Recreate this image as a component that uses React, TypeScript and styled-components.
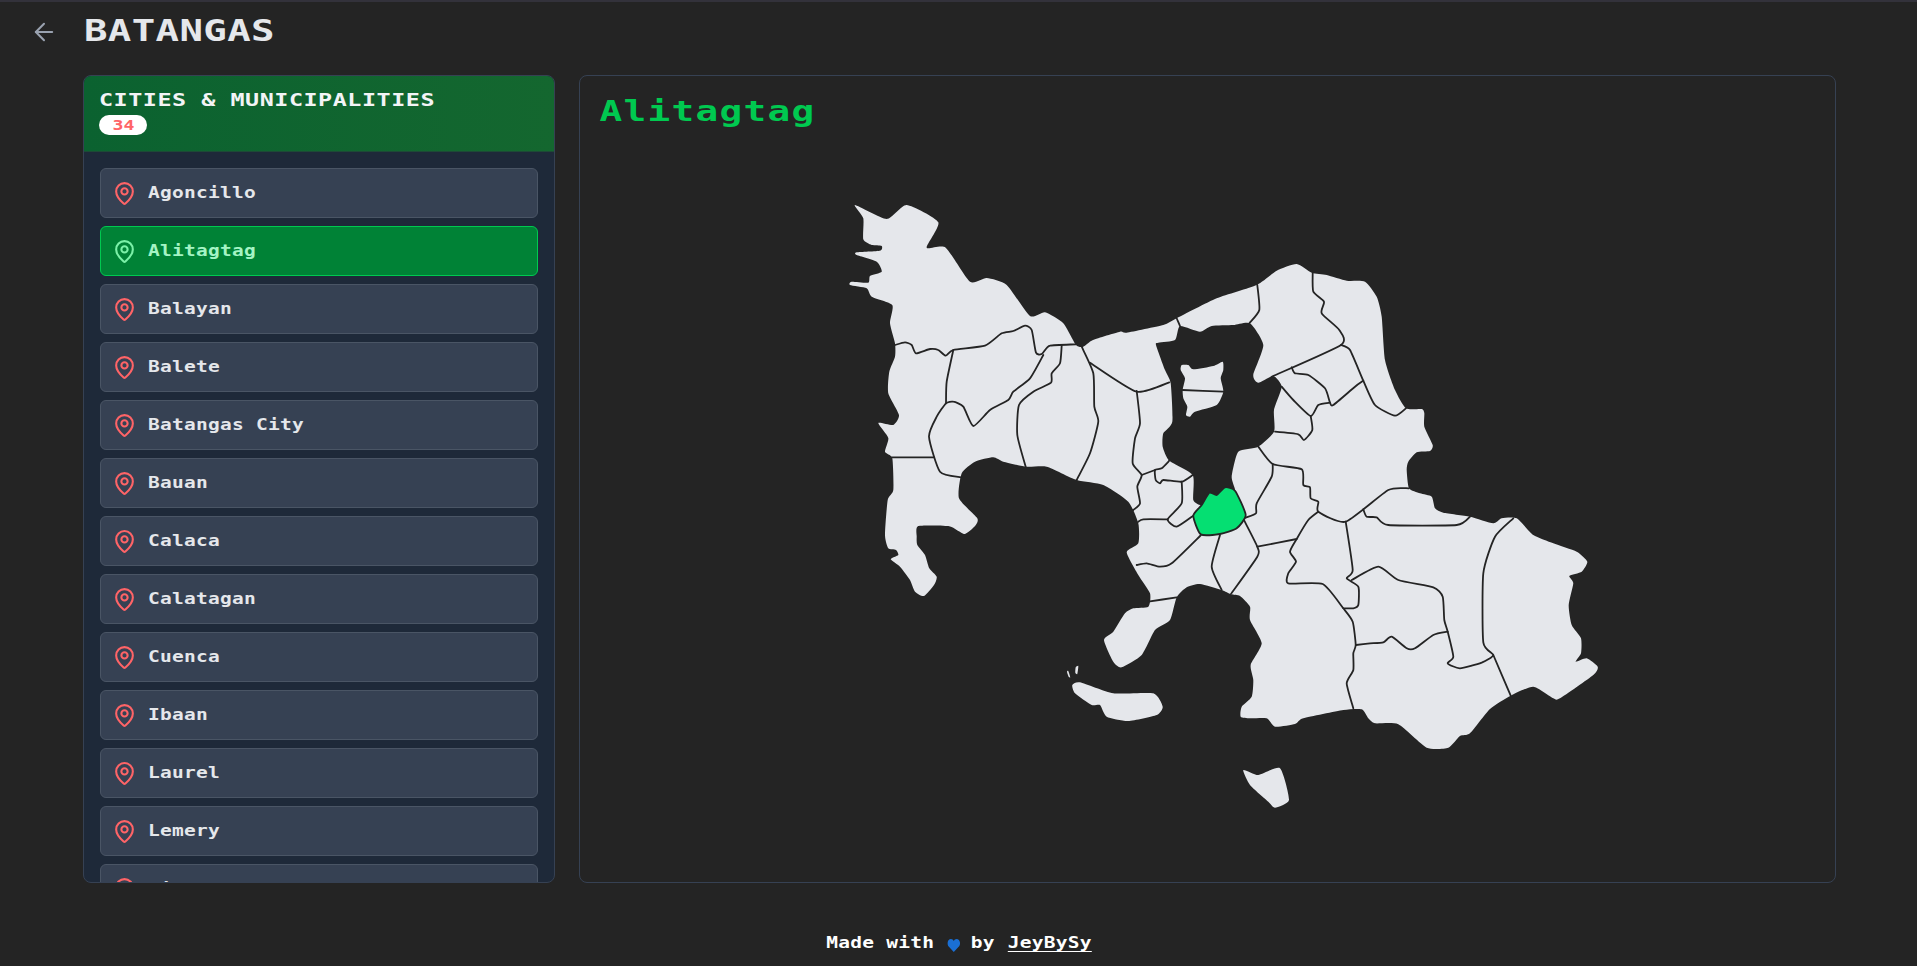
import styled, { createGlobalStyle, css } from "styled-components";
import { ArrowLeft, MapPin } from "lucide-react";

const municipalities = [
  "Agoncillo", "Alitagtag", "Balayan", "Balete", "Batangas City", "Bauan", "Calaca",
  "Calatagan", "Cuenca", "Ibaan", "Laurel", "Lemery", "Lian", "Lipa City", "Lobo",
  "Mabini", "Malvar", "Mataasnakahoy", "Nasugbu", "Padre Garcia", "Rosario", "San Jose",
  "San Juan", "San Luis", "San Nicolas", "San Pascual", "Santa Teresita", "Santo Tomas",
  "Taal", "Talisay", "Tanauan City", "Taysan", "Tingloy", "Tuy",
];

type Pts = number[];

// points traced from 3x crops of the map: origin of the crop + value / 3
const crop = (ox: number, oy: number, pts: Pts): Pts =>
  pts.map((v, i) => (i % 2 === 0 ? ox + v / 3 : oy + v / 3));

const spline = (pts: Pts, closed = false) => {
  const n = pts.length / 2;
  const at = (i: number) => {
    const k = closed ? (i + n) % n : Math.min(n - 1, Math.max(0, i));
    return [pts[k * 2], pts[k * 2 + 1]];
  };
  let d = `M${at(0)[0].toFixed(1)} ${at(0)[1].toFixed(1)}`;
  const t = 0.1;
  for (let i = 0; i < (closed ? n : n - 1); i++) {
    const [x0, y0] = at(i - 1);
    const [x1, y1] = at(i);
    const [x2, y2] = at(i + 1);
    const [x3, y3] = at(i + 2);
    d += `C${(x1 + (x2 - x0) * t).toFixed(1)} ${(y1 + (y2 - y0) * t).toFixed(1)} ${(x2 - (x3 - x1) * t).toFixed(1)} ${(y2 - (y3 - y1) * t).toFixed(1)} ${x2.toFixed(1)} ${y2.toFixed(1)}`;
  }
  return closed ? d + "Z" : d;
};

const mainland: Pts = [
  855, 205, 886.7, 219, 906.7, 205, 938.3, 222.3, 926.7, 247.7, 945.7, 247.7, 970, 281.7, 986.7, 278,
  1006.7, 285, 1030, 316, 1045, 312.3, 1063.3, 323.3, 1076, 345, 1083.3, 346.7, 1093, 340, 1120, 331.7,
  1126.7, 332.7, 1163.3, 325, 1176.7, 318.3, 1216.7, 298.3, 1256.7, 285, 1276.7, 270.7, 1296.7, 264,
  1311.7, 272.7, 1326.7, 275, 1346.7, 280.7, 1365, 281.7, 1376.7, 296.7, 1381.7, 316.7, 1385, 360,
  1395, 390, 1406, 408.3, 1421.7, 409, 1424.3, 413, 1424.3, 426.7, 1432.7, 445, 1430, 451, 1416.7, 452.3,
  1408.3, 461.7, 1406.7, 470, 1409, 488.3, 1420, 493.3, 1431.7, 496.7, 1435, 508.3, 1443.3, 512.7,
  1470, 516.7, 1493.3, 523.3, 1501.7, 518.3, 1516.7, 518.3, 1533.3, 535, 1553.3, 543.3, 1576.7, 551.7,
  1587.3, 561.7, 1581.7, 571.7, 1569.3, 576, 1573.3, 583.3, 1568.7, 605, 1571.7, 625, 1581, 638.3,
  1581, 653.3, 1575.7, 661.7, 1586.7, 658.3, 1597.7, 666.7, 1593.3, 675, 1560, 698.3, 1553.3, 698.3,
  1533.3, 686.7, 1510.7, 695.7, 1490, 709, 1470, 733.3, 1460, 736, 1448.3, 747.7, 1426.7, 747.7,
  1398.3, 724.3, 1375, 723.3, 1368.3, 718.3, 1361.7, 709.3, 1343.3, 710, 1303.3, 718.3, 1295, 724,
  1275, 726.7, 1266.7, 718.3, 1250, 718.3, 1240.7, 716.7, 1241.7, 706.7, 1251.7, 696.7, 1253.3, 680,
  1250.7, 665, 1261.7, 643.3, 1250, 620, 1250, 606.7, 1240, 596, 1231, 594.3, 1221.7, 590, 1200, 584,
  1186.7, 587.3, 1176.7, 597.3, 1170, 620, 1155, 630, 1141.7, 655, 1121.7, 667.3, 1113.3, 661.7, 1104, 640,
  1113.3, 631.7, 1125, 613.3, 1133.3, 608.3, 1148.3, 606.7, 1150, 593.3, 1138.3, 575, 1126.7, 552.3,
  1138.3, 543.3, 1138.3, 523.3, 1128.3, 501.7, 1103.3, 485, 1076.7, 480, 1046.7, 466.7, 1026.7, 466.7,
  1003.3, 461.7, 993.3, 457.3, 975, 461.7, 961.7, 473.3, 959, 498.3, 977.3, 518.3, 975, 526, 965, 534,
  956.7, 530, 948.3, 526, 918.3, 526, 916.7, 536.7, 917.3, 545, 925, 555, 929.3, 568.3, 936.7, 576.7,
  934, 585, 924, 596, 915, 591.7, 910, 580, 900, 566.7, 890.7, 559.3, 898.3, 555, 896, 550, 888.3, 548.3,
  885, 535, 887.7, 500, 893.3, 490, 892.3, 458.3, 885, 451.7, 888.3, 438, 878.3, 423, 893.3, 425, 899, 415,
  888.3, 393.3, 889.3, 371.7, 895, 356.7, 895, 343.3, 890, 323.3, 892.3, 305, 871.7, 296.7, 866.7, 288.3,
  850, 285, 851.7, 281.7, 868.3, 282.7, 870, 276, 881.7, 271.7, 876.7, 261.7, 856.7, 255, 856.7, 252.3,
  880, 250.7, 881.7, 246, 871.7, 245, 863.3, 239.3, 863.3, 218.3,
];

const lake = crop(1100, 250, [
  240, 228, 300, 245, 335, 228, 400, 225, 450, 220, 490, 285, 460, 375, 475, 398, 520, 378, 545, 410,
  522, 480, 522, 545, 475, 590, 415, 605, 395, 680, 405, 720, 375, 712, 350, 735, 328, 728, 305, 765,
  280, 750, 278, 675, 208, 632, 188, 590, 190, 550, 217, 515, 212, 400, 195, 360, 168, 285, 175, 278, 225, 270,
]);

const volcano = crop(1100, 250, [
  245, 345, 265, 345, 280, 358, 340, 348, 368, 335, 370, 360, 362, 385, 370, 425, 350, 465, 285, 485,
  270, 500, 258, 495, 262, 470, 250, 445, 248, 420, 255, 385, 242, 360,
]);

const islands = [
  crop(1000, 480, [217, 615, 240, 607, 340, 640, 460, 640, 488, 680, 470, 705, 385, 723, 320, 710, 300, 675, 275, 675, 225, 640]),
  crop(1000, 480, [730, 870, 775, 885, 840, 865, 867, 960, 825, 983, 805, 965, 750, 915]),
  crop(1000, 480, [201, 575, 205, 573, 211, 592, 206, 590]),
  crop(1000, 480, [227, 562, 235, 558, 232, 582, 226, 578]),
];

const alitagtag = crop(1100, 250, [
  280, 797, 305, 765, 328, 728, 350, 735, 375, 712, 405, 722, 437, 795, 410, 835, 360, 852, 302, 853,
]);

const borders: Pts[] = [
  crop(830, 190, [195, 465, 225, 457, 245, 465, 258, 490, 300, 477, 325, 480, 347, 497, 370, 480, 465, 467, 515, 430, 550, 423, 585, 407, 605, 420, 618, 488, 635, 492, 660, 467, 738, 463]),
  crop(830, 190, [370, 480, 350, 575, 348, 640]),
  crop(830, 190, [640, 495, 600, 565, 550, 605, 535, 630, 480, 660, 430, 708, 400, 650, 370, 635, 348, 640, 320, 680, 297, 740, 330, 845, 392, 862]),
  crop(830, 190, [185, 802, 312, 802]),
  crop(830, 190, [695, 467, 690, 520, 665, 550, 663, 578, 610, 605, 567, 645, 562, 735, 587, 830]),
  crop(830, 190, [755, 470, 790, 550, 793, 650, 805, 695, 780, 790, 740, 870]),
  crop(830, 190, [780, 518, 920, 605, 1018, 577]),
  crop(830, 190, [1040, 385, 1050, 408]),
  crop(1100, 250, [110, 423, 120, 520, 105, 565, 98, 640, 125, 675, 112, 710, 120, 760, 100, 780]),
  crop(1100, 250, [472, 105, 478, 180, 448, 220]),
  crop(1100, 250, [638, 68, 640, 125, 672, 155, 665, 190, 718, 240, 723, 285, 515, 380]),
  crop(1100, 250, [723, 285, 750, 300, 790, 392, 825, 465, 885, 497, 918, 475]),
  crop(1100, 250, [575, 352, 585, 370, 625, 375, 675, 415, 690, 458, 700, 465, 765, 410, 790, 392]),
  crop(1100, 250, [545, 410, 580, 450, 632, 498, 655, 465, 690, 458]),
  crop(1100, 250, [632, 498, 637, 540, 612, 570, 595, 553, 525, 545]),
  crop(1100, 250, [475, 590, 518, 642, 605, 658, 610, 705, 630, 712, 632, 745, 655, 755, 655, 785, 737, 815, 865, 720, 927, 715]),
  crop(1100, 250, [518, 642, 515, 680, 470, 760, 468, 790, 437, 803]),
  crop(1100, 250, [790, 778, 800, 800, 830, 802, 865, 825, 1070, 825, 1110, 800]),
  crop(1100, 250, [208, 632, 185, 655, 165, 660, 167, 690, 180, 700, 190, 690, 245, 695, 278, 675]),
  crop(1100, 250, [245, 695, 245, 760, 203, 808, 230, 830, 280, 797]),
  crop(1100, 250, [165, 660, 125, 675]),
  crop(1100, 250, [115, 815, 130, 808, 203, 808]),
  crop(1000, 480, [603, 165, 515, 250, 480, 260, 440, 250, 410, 255]),
  crop(1000, 480, [660, 165, 635, 260, 665, 330]),
  crop(1000, 480, [733, 122, 772, 200, 772, 230, 692, 343]),
  crop(1000, 480, [772, 200, 890, 177]),
  crop(1000, 480, [955, 95, 925, 120, 890, 177, 870, 215, 888, 245, 865, 280, 865, 310, 968, 312, 1030, 385, 1058, 425, 1067, 495, 1060, 520, 1060, 570, 1040, 610, 1060, 685]),
  crop(1000, 480, [1037, 125, 1058, 270, 1040, 295, 1075, 320, 1075, 375, 1060, 385, 1030, 385]),
  crop(1000, 480, [530, 352, 445, 365]),
  crop(1300, 480, [155, 300, 235, 260, 295, 300, 400, 322, 428, 350, 433, 420, 443, 455, 460, 530, 443, 550, 480, 565, 545, 548, 580, 525, 550, 487, 550, 280, 585, 170, 640, 115]),
  crop(1300, 480, [168, 495, 210, 490, 250, 487, 275, 470, 320, 505, 345, 505, 400, 465, 443, 455]),
  crop(1300, 480, [580, 525, 632, 647]),
  crop(1100, 250, [248, 420, 370, 425]),
];

const GlobalStyle = createGlobalStyle`
  body {
    margin: 0;
    background: #242424;
    overflow: hidden;
    font-family: "DejaVu Sans Mono", "Liberation Mono", monospace;
  }
`;

// the reference font is a wide pixel face, so the mono glyphs get stretched
const pixelText = css`
  display: inline-block;
  width: max-content;
  font-weight: 700;
  white-space: nowrap;
  transform: scaleX(1.3);
  transform-origin: left center;
`;

const Page = styled.div`
  height: 964px;
  border-top: 2px solid #33323b;
`;

const TopBar = styled.header`
  display: flex;
  align-items: center;
  gap: 26px;
  height: 56px;
  padding-left: 30px;
  margin-bottom: 17px;
  color: #99a1af;

  svg {
    margin-top: 3px;
  }
`;

const PageTitle = styled.h1`
  ${pixelText};
  margin: 0;
  font-size: 30px;
  letter-spacing: 0.3px;
  color: #e5e7eb;
`;

const Main = styled.main`
  display: grid;
  grid-template-columns: 472px 1257px;
  gap: 24px;
  width: 1753px;
  height: 808px;
  margin-left: 83px;
`;

const Panel = styled.aside`
  display: flex;
  flex-direction: column;
  min-height: 0;
  overflow: hidden;
  box-sizing: border-box;
  border: 1px solid #364153;
  border-radius: 8px;
  background: #1e2939;
`;

const PanelHeader = styled.div`
  flex: none;
  box-sizing: border-box;
  height: 76px;
  padding: 12px 15px 0;
  background: linear-gradient(90deg, #0b6230, #14672f);
  border-bottom: 1px solid #1d4a36;
`;

const PanelTitle = styled.h2`
  ${pixelText};
  display: block;
  margin: 0;
  font-size: 18px;
  line-height: 24px;
  letter-spacing: 0.4px;
  color: #f3f4f6;
`;

const Badge = styled.div`
  display: flex;
  align-items: center;
  justify-content: center;
  width: 48px;
  height: 20px;
  margin-top: 3px;
  border-radius: 10px;
  background: #fff;
  color: #ff6467;
`;

const BadgeText = styled.span`
  ${pixelText};
  font-size: 14px;
  transform-origin: center;
`;

const List = styled.ul`
  display: flex;
  flex-direction: column;
  gap: 8px;
  flex: 1;
  min-height: 0;
  margin: 0;
  padding: 16px;
  list-style: none;
  overflow-y: auto;
  scrollbar-width: none;
`;

const Item = styled.li<{ $active?: boolean }>`
  display: flex;
  align-items: center;
  flex: none;
  gap: 11px;
  box-sizing: border-box;
  height: 50px;
  padding-left: 11px;
  border: 1px solid ${({ $active }) => ($active ? "#00c950" : "#4a5565")};
  border-radius: 6px;
  background: ${({ $active }) => ($active ? "#008236" : "#364153")};
  color: ${({ $active }) => ($active ? "#7bf1a8" : "#ff6467")};
`;

const ItemName = styled.span<{ $active?: boolean }>`
  ${pixelText};
  font-size: 15px;
  letter-spacing: 0.2px;
  color: ${({ $active }) => ($active ? "#a4f4c4" : "#e5e7eb")};
`;

const MapCard = styled.section`
  display: flex;
  flex-direction: column;
  box-sizing: border-box;
  border: 1px solid #364153;
  border-radius: 8px;
`;

const MapTitle = styled.h2`
  ${pixelText};
  display: block;
  height: 36px;
  margin: 0;
  padding: 17px 0 11px 15px;
  font-size: 29px;
  line-height: 36px;
  letter-spacing: 1px;
  color: #00c950;
`;

const MapSvg = styled.svg`
  display: block;
  flex: none;
  width: 1255px;
  height: 742px;
`;

const Footer = styled.footer`
  display: flex;
  justify-content: center;
  padding: 50px 0 0 2px;
`;

const Credit = styled.div`
  display: flex;
  align-items: center;
  gap: 10px;
  height: 20px;
  transform: scaleX(1.3);
  color: #fff;
  font-size: 15px;
  font-weight: 700;
  letter-spacing: 0.2px;
  white-space: nowrap;
`;

const Author = styled.a`
  color: inherit;
  text-decoration: underline;
  text-underline-offset: 3px;
`;

const Heart = styled.svg`
  width: 10px;
  height: 13px;
  margin: 4px -2px 0 0;
`;

export default function App() {
  return (
    <Page>
      <GlobalStyle />
      <TopBar>
        <ArrowLeft size={28} strokeWidth={1.75} />
        <PageTitle>BATANGAS</PageTitle>
      </TopBar>
      <Main>
        <Panel>
          <PanelHeader>
            <PanelTitle>CITIES &amp; MUNICIPALITIES</PanelTitle>
            <Badge>
              <BadgeText>34</BadgeText>
            </Badge>
          </PanelHeader>
          <List>
            {municipalities.map((name) => (
              <Item key={name} $active={name === "Alitagtag"}>
                <MapPin size={25} strokeWidth={2} />
                <ItemName $active={name === "Alitagtag"}>{name}</ItemName>
              </Item>
            ))}
          </List>
        </Panel>
        <MapCard>
          <MapTitle>Alitagtag</MapTitle>
          <MapSvg viewBox="580 140 1255 742">
            <path d={spline(mainland, true) + spline(lake, true)} fill="#e5e7eb" fillRule="evenodd" />
            <path d={spline(volcano, true)} fill="#e5e7eb" />
            {islands.map((pts, i) => (
              <path key={i} d={spline(pts, true)} fill="#e5e7eb" />
            ))}
            {borders.map((pts, i) => (
              <path key={i} d={spline(pts)} fill="none" stroke="#242424" strokeWidth={1.8} strokeLinecap="round" />
            ))}
            <path d={spline(alitagtag, true)} fill="#05df72" stroke="#242424" strokeWidth={1.8} />
          </MapSvg>
        </MapCard>
      </Main>
      <Footer>
        <Credit>
          <span>Made with</span>
          <Heart viewBox="0 0 14 13" preserveAspectRatio="none">
            <path d="M7 13 1 7C-1 4 1 0 4 0c1.300 0 2.400.7 3 2 .6-1.300 1.700-2 3-2 3 0 5 4 3 7Z" fill="#1a6fd4" />
          </Heart>
          <span>by</span>
          <Author>JeyBySy</Author>
        </Credit>
      </Footer>
    </Page>
  );
}
